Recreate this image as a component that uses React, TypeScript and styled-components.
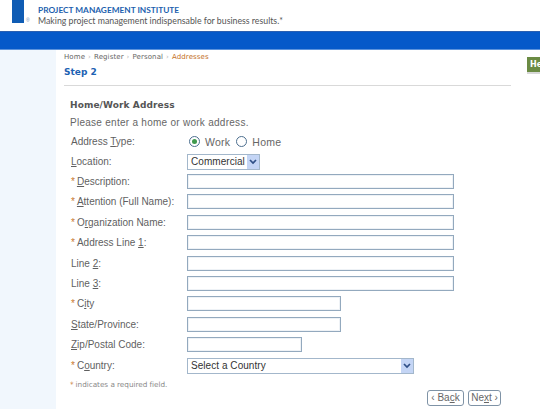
import React from "react";
import styled, { createGlobalStyle } from "styled-components";

const Global = createGlobalStyle`
  html, body { margin: 0; padding: 0; background: #fff; }
  body { font-family: "Liberation Sans", Arial, sans-serif; color: #555; }
`;
const Page = styled.div`
  position: relative; width: 540px; height: 409px; overflow: hidden; background: #fff;
`;
const Header = styled.header`
  height: 31px; display: flex; padding-left: 12px; box-sizing: border-box; background: #fff;
`;
const LogoMark = styled.div`
  width: 12px; height: 23px; background: #0f5cb4; flex: none;
`;
const Reg = styled.span`
  font-size: 5px; line-height: 6px; color: #6f8fb5; align-self: flex-start; margin: 17px 0 0 2px; width: 12px; flex: none;
`;
const Brand = styled.div`
  display: flex; flex-direction: column; padding-top: 5px;
`;
const BrandName = styled.div`
  font: bold 8.3px/11px "Lato", sans-serif; color: #1c5fae; white-space: nowrap;
`;
const Tagline = styled.div`
  font: 8.75px/9px "Lato", sans-serif; color: #555; white-space: nowrap;
`;
const Band = styled.div`
  height: 19px; background: #0559c9; border-top: 1px solid #2a5fb0; border-bottom: 1px solid #5c93dc; box-sizing: border-box;
`;
const Body = styled.div`
  display: flex; height: 359px;
`;
const Side = styled.aside`
  width: 56px; flex: none; background: #f1f7fd;
`;
const Main = styled.main`
  flex: 1; padding: 3px 29px 0 8px; min-width: 0;
`;
const Crumbs = styled.nav`
  font: 7px/9px "DejaVu Sans", sans-serif; color: #666; letter-spacing: 0.1px; display: flex; gap: 3px; white-space: nowrap;
`;
const Sep = styled.span`color: #b9b9b9;`;
const Current = styled.span`color: #c4701f;`;
const Step = styled.h1`
  margin: 4px 0 0; font: bold 9px/12px "DejaVu Sans", sans-serif; color: #1d62b3;
`;
const Rule = styled.hr`
  margin: 7px 0 0; border: 0; height: 1px; background: #d9d9d9;
`;
const Content = styled.div`
  padding: 13px 0 0 6px;
`;
const Title = styled.h2`
  margin: 0; font: bold 9px/12px "DejaVu Sans", sans-serif; color: #555; letter-spacing: 0.1px;
`;
const Intro = styled.p`
  margin: 5px 0 0; font: 10px/14px "Liberation Sans", sans-serif; color: #666; letter-spacing: 0.27px; white-space: nowrap;
`;
const Form = styled.div`
  display: grid; grid-template-columns: 117px 1fr; grid-auto-rows: 20.42px; margin-top: 1px;
  align-items: center;
`;
const Label = styled.label<{ $low?: boolean }>`
  font: 10px/12px "Liberation Sans", sans-serif; color: #5f5f5f; white-space: nowrap; padding: ${p => (p.$low ? "2px" : "0")} 0 0 1px;
  u { text-decoration-thickness: 1px; }
`;
const Star = styled.span`color: #c8792f; margin-right: 2px;`;
const Radios = styled.div`
  display: flex; align-items: center; font: 10.5px/12px "Liberation Sans", sans-serif; color: #666; letter-spacing: 0.25px; padding: 2px 0 0 2px;
`;
const Radio = styled.span<{ $on?: boolean }>`
  width: 9px; height: 9px; border-radius: 50%; border: 1px solid #4d6f8f; background: #fff; flex: none;
  margin: -1px 5px 0 ${p => (p.$on ? "0" : "6px")}; display: inline-flex; align-items: center; justify-content: center;
  &::after { content: ""; width: 5px; height: 5px; border-radius: 50%; background: ${p => (p.$on ? "#3f9a4d" : "transparent")}; }
`;
const Field = styled.div<{ $w: number }>`
  width: ${p => p.$w}px; height: 15px; box-sizing: border-box; background: #fff; margin-bottom: 1px;
  border: 1px solid #93a9be; box-shadow: inset 0 0 0 1px #eef2f6;
`;
const Select = styled.div<{ $w: number }>`
  width: ${p => p.$w}px; height: 16px; box-sizing: border-box; background: #fff; border: 1px solid #a3b7cb;
  display: flex; align-items: center; justify-content: space-between; padding-left: 3px;
  font: 10px/12px "Liberation Sans", sans-serif; color: #333; letter-spacing: 0.05px; white-space: nowrap;
`;
const Arrow = styled.span`
  width: 12px; height: 14px; background: #c4d5f5; flex: none; display: flex; align-items: center; justify-content: center;
`;
const Note = styled.div`
  font: 7.3px/9px "DejaVu Sans", sans-serif; color: #8a8a8a; margin-top: 4px; letter-spacing: -0.05px;
`;
const Buttons = styled.div`
  display: flex; justify-content: flex-end; gap: 4px; margin: 1px 10px 0 0;
`;
const Btn = styled.button<{ $w: number }>`
  width: ${p => p.$w}px; height: 16px; padding: 0; box-sizing: border-box; background: #fff; border: 1px solid #7f93a6; border-radius: 3px;
  font: 10px/12px "Liberation Sans", sans-serif; color: #666; white-space: nowrap;
`;
const HelpTab = styled.div`
  position: absolute; left: 527px; top: 57px; width: 20px; height: 17px; background: #6b8b44; color: #fff;
  font: bold 8px/15px "DejaVu Sans", sans-serif; padding-left: 3px; box-sizing: border-box;
  border-bottom: 2px solid #d8d8d8;
`;

const Chevron = () => (
  <svg width="8" height="6" viewBox="0 0 8 6"><path d="M1 1l3 3 3-3" fill="none" stroke="#2f4f86" strokeWidth="1.7" /></svg>
);

const rows: { label: React.ReactNode; req?: boolean; w: number }[] = [
  { label: <><u>D</u>escription:</>, req: true, w: 267 },
  { label: <><u>A</u>ttention (Full Name):</>, req: true, w: 267 },
  { label: <>O<u>r</u>ganization Name:</>, req: true, w: 267 },
  { label: <>Address Line <u>1</u>:</>, req: true, w: 267 },
  { label: <>Line <u>2</u>:</>, w: 267 },
  { label: <>Line <u>3</u>:</>, w: 267 },
  { label: <>C<u>i</u>ty</>, req: true, w: 154 },
  { label: <><u>S</u>tate/Province:</>, w: 154 },
  { label: <><u>Z</u>ip/Postal Code:</>, w: 115 },
];

export default function App() {
  return (
    <Page>
      <Global />
      <Header>
        <LogoMark />
        <Reg>®</Reg>
        <Brand>
          <BrandName>PROJECT MANAGEMENT INSTITUTE</BrandName>
          <Tagline>Making project management indispensable for business results.*</Tagline>
        </Brand>
      </Header>
      <Band />
      <Body>
        <Side />
        <Main>
          <Crumbs>
            <span>Home</span><Sep>›</Sep><span>Register</span><Sep>›</Sep><span>Personal</span><Sep>›</Sep><Current>Addresses</Current>
          </Crumbs>
          <Step>Step 2</Step>
          <Rule />
          <Content>
            <Title>Home/Work Address</Title>
            <Intro>Please enter a home or work address.</Intro>
            <Form>
              <Label $low>Address <u>T</u>ype:</Label>
              <Radios>
                <Radio $on />Work<Radio />Home
              </Radios>
              <Label><u>L</u>ocation:</Label>
              <Select $w={73}>Commercial<Arrow><Chevron /></Arrow></Select>
              {rows.map((r, i) => (
                <React.Fragment key={i}>
                  <Label>{r.req && <Star>*</Star>}{r.label}</Label>
                  <Field $w={r.w} />
                </React.Fragment>
              ))}
              <Label><Star>*</Star>C<u>o</u>untry:</Label>
              <Select $w={227}>Select a Country<Arrow><Chevron /></Arrow></Select>
            </Form>
            <Note><Star>*</Star>indicates a required field.</Note>
            <Buttons>
              <Btn $w={37}>‹ Ba<u>c</u>k</Btn>
              <Btn $w={33}>Ne<u>x</u>t ›</Btn>
            </Buttons>
          </Content>
        </Main>
      </Body>
      <HelpTab>He</HelpTab>
    </Page>
  );
}
